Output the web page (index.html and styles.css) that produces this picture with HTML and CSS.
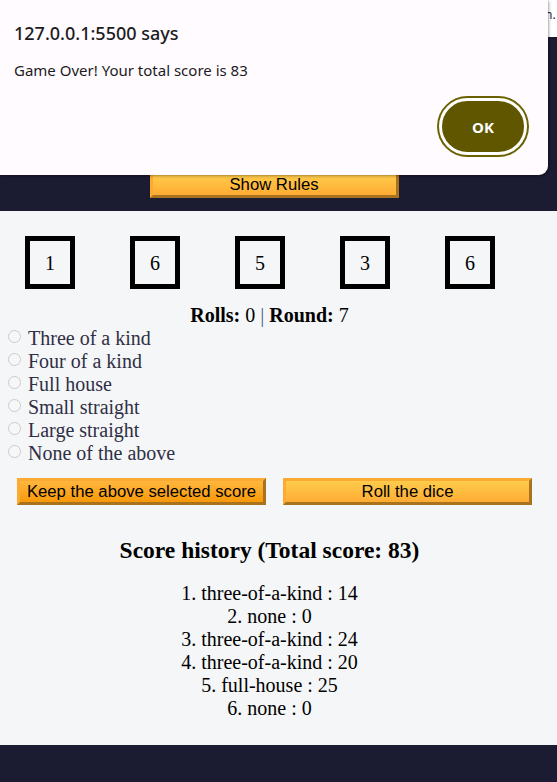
FILE: index.html
```html
<!DOCTYPE html>
<html lang="en">
<head>
<meta charset="utf-8">
<title>Advanced Dice Game</title>
<link rel="stylesheet" href="styles.css">
</head>
<body>
<header class="top">
  <button class="btn rules-btn">Show Rules</button>
</header>
<main class="game">
  <div class="dice">
    <div class="die">1</div>
    <div class="die">6</div>
    <div class="die">5</div>
    <div class="die">3</div>
    <div class="die">6</div>
  </div>
  <p class="stats"><strong>Rolls:</strong> 0 <span class="pipe">|</span> <strong>Round:</strong> 7</p>
  <form class="options">
    <label class="opt"><input type="radio" name="score" disabled><span>Three of a kind</span></label>
    <label class="opt"><input type="radio" name="score" disabled><span>Four of a kind</span></label>
    <label class="opt"><input type="radio" name="score" disabled><span>Full house</span></label>
    <label class="opt"><input type="radio" name="score" disabled><span>Small straight</span></label>
    <label class="opt"><input type="radio" name="score" disabled><span>Large straight</span></label>
    <label class="opt"><input type="radio" name="score" disabled><span>None of the above</span></label>
  </form>
  <div class="actions">
    <button class="btn btn-hover">Keep the above selected score</button>
    <button class="btn">Roll the dice</button>
  </div>
  <h2 class="history-title">Score history (Total score: 83)</h2>
  <ol class="history">
    <li>1. three-of-a-kind : 14</li>
    <li>2. none : 0</li>
    <li>3. three-of-a-kind : 24</li>
    <li>4. three-of-a-kind : 20</li>
    <li>5. full-house : 25</li>
    <li>6. none : 0</li>
  </ol>
</main>
<footer class="bottom"></footer>

<div class="topstrip"><span class="strip-text">n.</span></div>
<div class="dialog" role="alertdialog">
  <div class="dialog-title">127.0.0.1:5500 says</div>
  <div class="dialog-msg">Game Over! Your total score is 83</div>
  <div class="dialog-actions">
    <button class="ok-btn">OK</button>
  </div>
</div>
</body>
</html>
```

FILE: styles.css
```css
* {
  box-sizing: border-box;
}

html, body {
  margin: 0;
  padding: 0;
}

body {
  background-color: #1b1b32;
  font-family: "Liberation Serif", "Times New Roman", serif;
  color: #000;
  width: 557px;
  height: 782px;
  overflow: hidden;
  position: relative;
}

.top {
  height: 211px;
  display: flex;
  align-items: flex-end;
  justify-content: center;
  padding-bottom: 13px;
  padding-right: 9px;
}

.btn {
  font-family: "Liberation Sans", Arial, sans-serif;
  font-size: 16.7px;
  color: #000;
  width: 249px;
  height: 27px;
  padding: 0;
  margin: 0;
  background-color: #feac32;
  background-image: linear-gradient(#fecc4c, #ffac33);
  border-width: 3px;
  border-style: solid;
  border-color: #fdaa33 #a9721f #a9721f #fdaa33;
  cursor: pointer;
  line-height: 19px;
}

.btn-hover {
  background-image: linear-gradient(#ffb73f, #f89808);
}

.game {
  background-color: #f5f6f7;
  padding: 25px 0 24px;
  height: 534px;
}

.dice {
  display: flex;
  gap: 55px;
  padding-left: 25px;
}

.die {
  width: 50px;
  height: 53px;
  border: 5px solid #000;
  display: flex;
  align-items: center;
  justify-content: center;
  font-size: 20px;
  padding-top: 2px;
}

.stats {
  margin: 15px 0 0;
  text-align: center;
  font-size: 20px;
  line-height: 23px;
  padding-right: 18px;
}

.pipe {
  color: #4a5a8a;
}

.options {
  display: flex;
  flex-direction: column;
  margin: 0;
}

.opt {
  display: flex;
  align-items: center;
  height: 23px;
  font-size: 20px;
  color: #2f2f45;
}

.opt input {
  appearance: none;
  -webkit-appearance: none;
  width: 13px;
  height: 13px;
  margin: 0 7px 0 8px;
  border: 1px solid #cbcbcb;
  border-radius: 50%;
  background: #f7f7f7;
  position: relative;
  top: -2px;
}

.actions {
  display: flex;
  gap: 17px;
  margin-top: 13px;
  padding-left: 17px;
}

.history-title {
  margin: 31px 0 0;
  text-align: center;
  font-size: 23.5px;
  line-height: 28px;
  padding-right: 18px;
}

.history {
  list-style: none;
  margin: 18px 0 0;
  padding: 0 18px 0 0;
  text-align: center;
  font-size: 20px;
  line-height: 23px;
}

.bottom {
  height: 37px;
}

.topstrip {
  position: absolute;
  top: 0;
  left: 0;
  width: 557px;
  height: 37px;
  background: #fff;
  overflow: hidden;
}

.strip-text {
  position: absolute;
  left: 545px;
  top: 6px;
  font-family: "Noto Sans", sans-serif;
  font-size: 12px;
  color: #1a1a40;
}

.dialog {
  position: absolute;
  top: 0;
  left: 0;
  width: 548px;
  height: 175px;
  background: #fffbfe;
  border-bottom-right-radius: 9px;
  box-shadow: 1px 1px 3px rgba(0, 0, 0, 0.35), 0 0 1px rgba(0, 0, 0, 0.2);
  font-family: "Noto Sans", "Open Sans", sans-serif;
  color: #1c1b1f;
  padding: 20px 14px 0;
}

.dialog-title {
  font-size: 18px;
  line-height: 26px;
  font-weight: 500;
}

.dialog-msg {
  font-size: 15px;
  line-height: 20px;
  margin-top: 14px;
}

.dialog-actions {
  display: flex;
  justify-content: flex-end;
  margin-top: 18px;
  padding-right: 7px;
}

.ok-btn {
  width: 88px;
  height: 57px;
  border-radius: 29px;
  background: #605600;
  border: 3px solid #fff;
  box-shadow: 0 0 0 2px #6b6100;
  color: #fff;
  font-family: "Noto Sans", "Open Sans", sans-serif;
  font-weight: 700;
  font-size: 15px;
  padding: 0;
}
```
